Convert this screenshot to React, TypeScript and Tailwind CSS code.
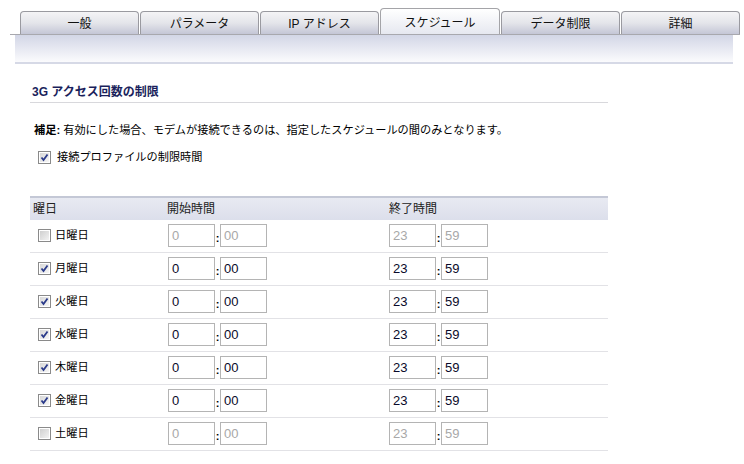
const font = { fontFamily: '"Liberation Sans", "Noto Sans CJK JP", sans-serif' };

const tabs = ["一般", "パラメータ", "IP アドレス", "スケジュール", "データ制限", "詳細"];

const days = [
  { name: "日曜日", on: false },
  { name: "月曜日", on: true },
  { name: "火曜日", on: true },
  { name: "水曜日", on: true },
  { name: "木曜日", on: true },
  { name: "金曜日", on: true },
  { name: "土曜日", on: false },
];

function Check({ on }: { on: boolean }) {
  return (
    <svg width="13" height="13" viewBox="0 0 13 13" className="shrink-0">
      <defs>
        <linearGradient id={on ? "cbOn" : "cbOff"} x1="0" y1="0" x2="1" y2="1">
          <stop offset="0" stopColor={on ? "#d8d8d8" : "#cfcfcf"} />
          <stop offset="1" stopColor={on ? "#f6f6f6" : "#f2f2f2"} />
        </linearGradient>
      </defs>
      <rect x="0.5" y="0.5" width="12" height="12" fill="#fff" stroke="#8a8a8a" />
      <rect x="2" y="2" width="9" height="9" fill={`url(#${on ? "cbOn" : "cbOff"})`} />
      {on && <path d="M3.5 6.5 L5.5 9 L9.5 3.5" fill="none" stroke="#2a3a8a" strokeWidth="1.8" />}
    </svg>
  );
}

function Box({ value, off }: { value: string; off: boolean }) {
  return (
    <div
      className={`flex h-[23px] w-[47px] items-center border border-[#b4b4b4] bg-white pl-[3px] text-[13px] ${
        off ? "text-[#a8a8a8]" : "text-[#0a0a2a]"
      }`}
    >
      {value}
    </div>
  );
}

function Time({ h, m, off }: { h: string; m: string; off: boolean }) {
  return (
    <div className="flex items-center">
      <Box value={h} off={off} />
      <span className="w-[5px] pt-[5px] text-center text-[11px] font-bold leading-none text-black">:</span>
      <Box value={m} off={off} />
    </div>
  );
}

export default function App() {
  return (
    <div className="h-[464px] w-[744px] overflow-hidden bg-white text-[11.2px] text-black" style={font}>
      {/* tabs */}
      <div className="flex h-[34px] items-end gap-[1px] pl-[20px]">
        {tabs.map((t, i) =>
          i === 3 ? (
            <div
              key={t}
              className="flex h-[26px] w-[120px] items-center justify-center rounded-t-[4px] border border-b-0 border-[#a4a4a8] bg-gradient-to-b from-[#ffffff] to-[#e6e8f0] pt-[2px] text-[12px] text-[#111]"
            >
              {t}
            </div>
          ) : (
            <div
              key={t}
              className="flex h-[23px] w-[119px] items-center justify-center rounded-t-[4px] border border-b-0 border-[#9a9aa0] bg-gradient-to-b from-[#f4f4f6] via-[#e4e5ea] to-[#c4c6d6] pt-[1px] text-[12px] text-[#111]"
            >
              {t}
            </div>
          )
        )}
      </div>
      <div className="ml-[10px] mr-[4px] h-px bg-[#a8a8ae]" />
      <div className="ml-[15px] mr-[11px] h-[27px] bg-gradient-to-b from-[#d2d6e6] to-[#fbfbfd]" />
      <div className="ml-[15px] mr-[11px] h-[2px] bg-[#d6d9e6]" />

      {/* section */}
      <div className="ml-[30px] w-[578px]">
        <div className="mt-[19px] border-b border-[#d8d8dc] pb-[1px] pl-[2px] text-[12px] font-bold text-[#1a1f5c]">
          3G アクセス回数の制限
        </div>
        <div className="mt-[19px] pl-[4px]">
          <span className="font-bold">補足:</span> 有効にした場合、モデムが接続できるのは、指定したスケジュールの間のみとなります。
        </div>
        <div className="mt-[10px] flex items-center gap-[6px] pl-[8px]">
          <Check on={true} />
          <span>接続プロファイルの制限時間</span>
        </div>

        {/* table */}
        <div className="mt-[30px] border-t-2 border-[#c4c8d6]">
          <div className="flex h-[22px] items-center bg-gradient-to-b from-[#e8eaf2] to-[#dcdfeb] text-[12px] text-[#222]">
            <div className="w-[137px] pl-[3px]">曜日</div>
            <div className="w-[222px]">開始時間</div>
            <div>終了時間</div>
          </div>
          {days.map((d) => (
            <div key={d.name} className="flex h-[33px] items-center border-b border-[#e2e2e6]">
              <div className="flex w-[138px] items-center gap-[4px] pl-[8px]">
                <Check on={d.on} />
                <span>{d.name}</span>
              </div>
              <div className="w-[221px]">
                <Time h="0" m="00" off={!d.on} />
              </div>
              <Time h="23" m="59" off={!d.on} />
            </div>
          ))}
        </div>
      </div>
    </div>
  );
}
